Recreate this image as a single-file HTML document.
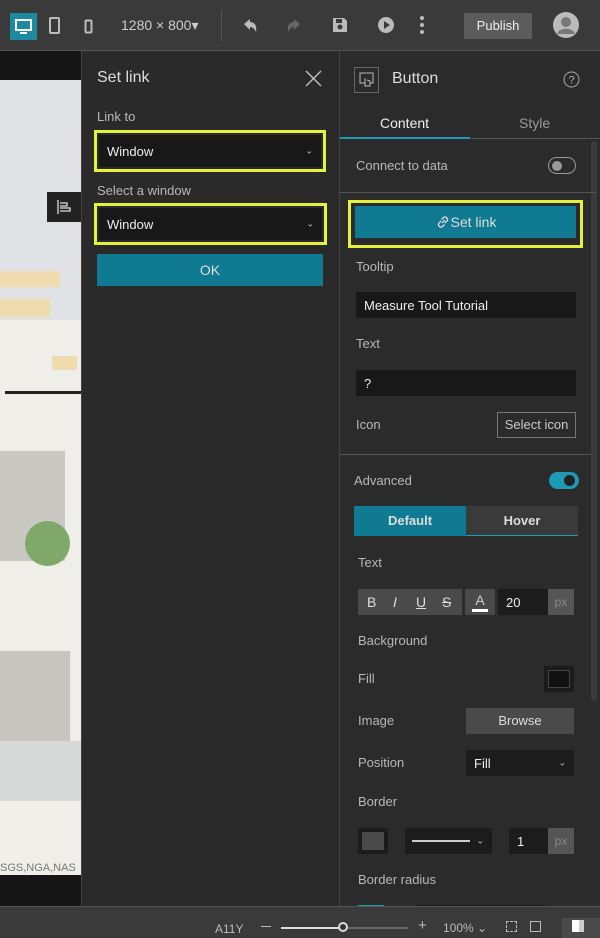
<!DOCTYPE html>
<html><head><meta charset="utf-8"><style>
*{box-sizing:border-box;margin:0;padding:0}
body{width:600px;height:938px;overflow:hidden;background:#2b2b2b;font-family:"Liberation Sans",sans-serif;color:#ddd;position:relative}
.a{position:absolute}
.t{font-size:13px;color:#b8b8b8}
.inp{background:#181818;color:#eee;font-size:13px;padding-left:8px;display:flex;align-items:center}
.yb{border:3px solid #e3f23a}
.chev{position:absolute;right:8px;top:50%;transform:translateY(-50%);font-size:9px;color:#ccc}
</style></head><body>
<!-- top bar -->
<div class="a" style="left:0;top:0;width:600px;height:51px;background:#3a3a3a;border-bottom:1px solid #555"></div>
<div class="a" style="left:10px;top:13px;width:27px;height:27px;background:#1d8aa0"></div>
<svg class="a" style="left:14px;top:17px" width="19" height="19" viewBox="0 0 19 19"><rect x="2" y="3" width="15" height="10" fill="none" stroke="#fff" stroke-width="2"/><rect x="6" y="15" width="7" height="2" fill="#fff"/></svg>
<svg class="a" style="left:48px;top:16px" width="14" height="20"><rect x="2" y="2" width="9" height="15" rx="1" fill="none" stroke="#bbb" stroke-width="2"/></svg>
<svg class="a" style="left:84px;top:19px" width="10" height="16"><rect x="1.5" y="1.5" width="6" height="12" rx="1" fill="none" stroke="#bbb" stroke-width="2"/></svg>
<div class="a" style="left:121px;top:17px;font-size:14px;color:#ccc">1280 × 800▾</div>
<div class="a" style="left:221px;top:10px;width:1px;height:31px;background:#555"></div>
<svg class="a" style="left:240px;top:16px" width="20" height="20"><path d="M4 8 L10 3 L10 6 C15 6 17 10 16 16 C14 12 12 11 10 11 L10 14 Z" fill="#bbb"/></svg>
<svg class="a" style="left:284px;top:16px" width="20" height="20"><path d="M16 8 L10 3 L10 6 C5 6 3 10 4 16 C6 12 8 11 10 11 L10 14 Z" fill="#666"/></svg>
<svg class="a" style="left:331px;top:16px" width="18" height="18"><path d="M2 2 H13 L16 5 V16 H2 Z" fill="#bbb"/><rect x="5" y="3" width="6" height="4" fill="#3a3a3a"/><circle cx="9" cy="11" r="2.5" fill="#3a3a3a"/></svg>
<svg class="a" style="left:377px;top:16px" width="18" height="18"><circle cx="9" cy="9" r="8" fill="#bbb"/><path d="M7 5 L13 9 L7 13Z" fill="#3a3a3a"/></svg>
<svg class="a" style="left:418px;top:15px" width="8" height="20"><circle cx="4" cy="3" r="2" fill="#bbb"/><circle cx="4" cy="10" r="2" fill="#bbb"/><circle cx="4" cy="17" r="2" fill="#bbb"/></svg>
<div class="a" style="left:464px;top:13px;width:68px;height:26px;background:#5c5c5c;color:#eee;font-size:13px;text-align:center;line-height:26px">Publish</div>
<svg class="a" style="left:553px;top:12px" width="26" height="26"><circle cx="13" cy="13" r="13" fill="#bbb"/><circle cx="13" cy="10" r="5" fill="#777"/><path d="M4 22 C6 15 20 15 22 22Z" fill="#777"/></svg>

<!-- map strip -->
<div class="a" style="left:0;top:51px;width:81px;height:855px;background:#efeee8;overflow:hidden">
 <div class="a" style="left:0;top:0;width:81px;height:29px;background:#151515"></div>
 <div class="a" style="left:0;top:29px;width:81px;height:240px;background:#e0e2e6"></div>
 <div class="a" style="left:0;top:220px;width:60px;height:16px;background:#efdcae"></div>
 <div class="a" style="left:0;top:248px;width:50px;height:18px;background:#efdcae"></div>
 <div class="a" style="left:52px;top:305px;width:25px;height:14px;background:#efdcae"></div>
 <div class="a" style="left:5px;top:340px;width:76px;height:3px;background:#222"></div>
 <div class="a" style="left:0;top:400px;width:65px;height:110px;background:#c9c8c3"></div>
 <div class="a" style="left:25px;top:470px;width:45px;height:45px;border-radius:50%;background:#80a86a"></div>
 <div class="a" style="left:0;top:600px;width:70px;height:90px;background:#c6c5c0"></div>
 <div class="a" style="left:0;top:690px;width:81px;height:60px;background:#d7d8d8"></div>
 <div class="a" style="left:0;top:810px;width:81px;height:14px;background:#efeee8;font-size:11px;color:#777;line-height:14px">SGS,NGA,NAS</div>
 <div class="a" style="left:0;top:824px;width:81px;height:31px;background:#151515"></div>
 <div class="a" style="left:47px;top:141px;width:34px;height:30px;background:#222"></div>
 <svg class="a" style="left:56px;top:148px" width="16" height="16"><path d="M2 1V15 M4 4H11V7H4 M4 9H14V12H4" fill="none" stroke="#ddd" stroke-width="1.3"/></svg>
</div>

<!-- dialog -->
<div class="a" style="left:81px;top:51px;width:259px;height:855px;background:#2a2a2a;border-left:1px solid #444;border-right:1px solid #444"></div>
<div class="a" style="left:97px;top:69px;font-size:16px;color:#ddd">Set link</div>
<svg class="a" style="left:305px;top:70px" width="17" height="17"><path d="M1 1L16 16M16 1L1 16" stroke="#bbb" stroke-width="1.5"/></svg>
<div class="a t" style="left:97px;top:109px">Link to</div>
<div class="a yb" style="left:94px;top:130px;width:232px;height:42px;background:#2a2a2a;padding:2px">
 <div class="inp" style="height:32px;position:relative">Window<span class="chev">⌄</span></div></div>
<div class="a t" style="left:97px;top:183px">Select a window</div>
<div class="a yb" style="left:94px;top:203px;width:233px;height:42px;background:#2a2a2a;padding:2px">
 <div class="inp" style="height:32px;position:relative">Window<span class="chev">⌄</span></div></div>
<div class="a" style="left:97px;top:254px;width:226px;height:32px;background:#0f7a91;color:#ddd;font-size:14px;text-align:center;line-height:32px">OK</div>

<!-- right panel -->
<div class="a" style="left:354px;top:67px;width:25px;height:26px;border:1px solid #666"></div>
<svg class="a" style="left:358px;top:71px" width="18" height="18"><rect x="2" y="2" width="13" height="10" fill="none" stroke="#bbb"/><path d="M7 7V15H12V10L9 9" fill="#2b2b2b" stroke="#bbb"/></svg>
<div class="a" style="left:392px;top:70px;font-size:16px;color:#ddd">Button</div>
<svg class="a" style="left:563px;top:71px" width="17" height="17"><circle cx="8.5" cy="8.5" r="7.5" fill="none" stroke="#aaa"/><text x="8.5" y="12.5" font-size="11" text-anchor="middle" fill="#aaa" font-family="Liberation Sans">?</text></svg>
<div class="a" style="left:380px;top:115px;font-size:14px;color:#eee">Content</div>
<div class="a" style="left:519px;top:115px;font-size:14px;color:#999">Style</div>
<div class="a" style="left:340px;top:138px;width:260px;height:1px;background:#555"></div>
<div class="a" style="left:340px;top:137px;width:130px;height:2px;background:#1d9ab5"></div>
<div class="a" style="left:591px;top:141px;width:6px;height:560px;background:#3a3a3a;border-radius:3px"></div>
<div class="a t" style="left:356px;top:158px">Connect to data</div>
<div class="a" style="left:548px;top:157px;width:28px;height:17px;border:1.5px solid #999;border-radius:9px"></div>
<div class="a" style="left:552px;top:161px;width:10px;height:10px;border-radius:50%;background:#999"></div>
<div class="a" style="left:340px;top:192px;width:256px;height:1px;background:#555"></div>
<div class="a yb" style="left:348px;top:200px;width:235px;height:48px;background:#2b2b2b;padding:3px 4px">
 <div style="height:32px;background:#0f7a91;color:#ddd;font-size:14px;text-align:center;line-height:32px"><svg width="16" height="16" style="vertical-align:-3px"><path d="M7 9L10 6M6 7L4 9A2.5 2.5 0 0 0 7.5 12.5L9.5 10.5M10 9L12 7A2.5 2.5 0 0 0 8.5 3.5L6.5 5.5" fill="none" stroke="#ddd" stroke-width="1.3"/></svg>Set link</div></div>
<div class="a t" style="left:356px;top:259px">Tooltip</div>
<div class="a inp" style="left:356px;top:292px;width:220px;height:26px">Measure Tool Tutorial</div>
<div class="a t" style="left:356px;top:336px">Text</div>
<div class="a inp" style="left:356px;top:370px;width:220px;height:26px">?</div>
<div class="a t" style="left:356px;top:417px">Icon</div>
<div class="a" style="left:497px;top:412px;width:79px;height:26px;border:1px solid #777;font-size:13px;color:#ccc;text-align:center;line-height:24px">Select icon</div>
<div class="a" style="left:340px;top:454px;width:251px;height:1px;background:#555"></div>
<div class="a t" style="left:354px;top:473px">Advanced</div>
<div class="a" style="left:549px;top:472px;width:30px;height:17px;border-radius:9px;background:#1d9ab5"></div>
<div class="a" style="left:564px;top:475px;width:11px;height:11px;border-radius:50%;background:#222"></div>
<div class="a" style="left:354px;top:506px;width:112px;height:30px;background:#0f7a91;color:#ddd;font-size:13px;font-weight:bold;text-align:center;line-height:30px">Default</div>
<div class="a" style="left:466px;top:506px;width:112px;height:30px;background:#3a3a3a;color:#ddd;font-size:13px;font-weight:bold;text-align:center;line-height:30px;border-bottom:1px solid #1d9ab5">Hover</div>
<div class="a t" style="left:358px;top:555px">Text</div>
<div class="a" style="left:358px;top:589px;width:104px;height:26px;background:#4a4a4a;color:#ddd;font-size:14px;line-height:26px;word-spacing:0">
<span style="position:absolute;left:9px">B</span><span style="position:absolute;left:35px;font-style:italic">I</span><span style="position:absolute;left:58px;text-decoration:underline">U</span><span style="position:absolute;left:84px;text-decoration:line-through">S</span></div>
<div class="a" style="left:465px;top:589px;width:30px;height:26px;background:#4a4a4a;color:#ccc;font-size:14px;text-align:center;line-height:22px">A<div style="position:absolute;left:7px;top:20px;width:16px;height:3px;background:#fff"></div></div>
<div class="a inp" style="left:498px;top:589px;width:50px;height:26px;background:#1c1c1c">20</div>
<div class="a" style="left:548px;top:589px;width:26px;height:26px;background:#555;color:#888;font-size:12px;text-align:center;line-height:26px">px</div>
<div class="a t" style="left:358px;top:633px">Background</div>
<div class="a t" style="left:358px;top:671px">Fill</div>
<div class="a" style="left:544px;top:666px;width:30px;height:26px;background:#1c1c1c;padding:4px"><div style="width:100%;height:100%;background:#111;border:1px solid #444"></div></div>
<div class="a t" style="left:358px;top:713px">Image</div>
<div class="a" style="left:466px;top:708px;width:108px;height:26px;background:#4a4a4a;color:#ddd;font-size:13px;text-align:center;line-height:26px">Browse</div>
<div class="a t" style="left:358px;top:755px">Position</div>
<div class="a inp" style="left:466px;top:750px;width:108px;height:26px;background:#1c1c1c;position:absolute">Fill<span class="chev">⌄</span></div>
<div class="a t" style="left:358px;top:794px">Border</div>
<div class="a" style="left:358px;top:828px;width:30px;height:26px;background:#1c1c1c;padding:4px"><div style="width:100%;height:100%;background:#4a4a4a"></div></div>
<div class="a" style="left:405px;top:828px;width:87px;height:26px;background:#1c1c1c"><div style="position:absolute;left:7px;top:12px;width:58px;height:2px;background:#ccc"></div><span class="chev">⌄</span></div>
<div class="a inp" style="left:509px;top:828px;width:39px;height:26px;background:#1c1c1c">1</div>
<div class="a" style="left:548px;top:828px;width:26px;height:26px;background:#555;color:#888;font-size:12px;text-align:center;line-height:26px">px</div>
<div class="a t" style="left:358px;top:872px">Border radius</div>
<div class="a" style="left:358px;top:905px;width:26px;height:2px;background:#1d9ab5"></div>
<div class="a" style="left:416px;top:905px;width:130px;height:2px;background:#1c1c1c"></div>

<!-- bottom bar -->
<div class="a" style="left:0;top:906px;width:600px;height:32px;background:#3a3a3a;border-top:1px solid #555"></div>
<div class="a" style="left:215px;top:922px;font-size:12px;color:#bbb">A11Y</div>
<div class="a" style="left:261px;top:926px;width:10px;height:1px;background:#bbb"></div>
<div class="a" style="left:281px;top:927px;width:62px;height:2px;background:#ddd"></div>
<div class="a" style="left:343px;top:927px;width:65px;height:2px;background:#666"></div>
<div class="a" style="left:338px;top:922px;width:10px;height:10px;border-radius:50%;border:2px solid #ddd;background:#333"></div>
<div class="a" style="left:418px;top:917px;font-size:15px;color:#bbb">+</div>
<div class="a" style="left:443px;top:921px;font-size:12px;color:#bbb">100% ⌄</div>
<div class="a" style="left:506px;top:921px;width:11px;height:11px;border:1px dashed #bbb"></div>
<div class="a" style="left:530px;top:921px;width:11px;height:11px;border:1px solid #bbb"></div>
<div class="a" style="left:562px;top:918px;width:38px;height:20px;background:#4a4a4a"></div>
<div class="a" style="left:572px;top:920px;width:12px;height:12px;background:#fff;border-right:5px solid #ccc"></div>
</body></html>
